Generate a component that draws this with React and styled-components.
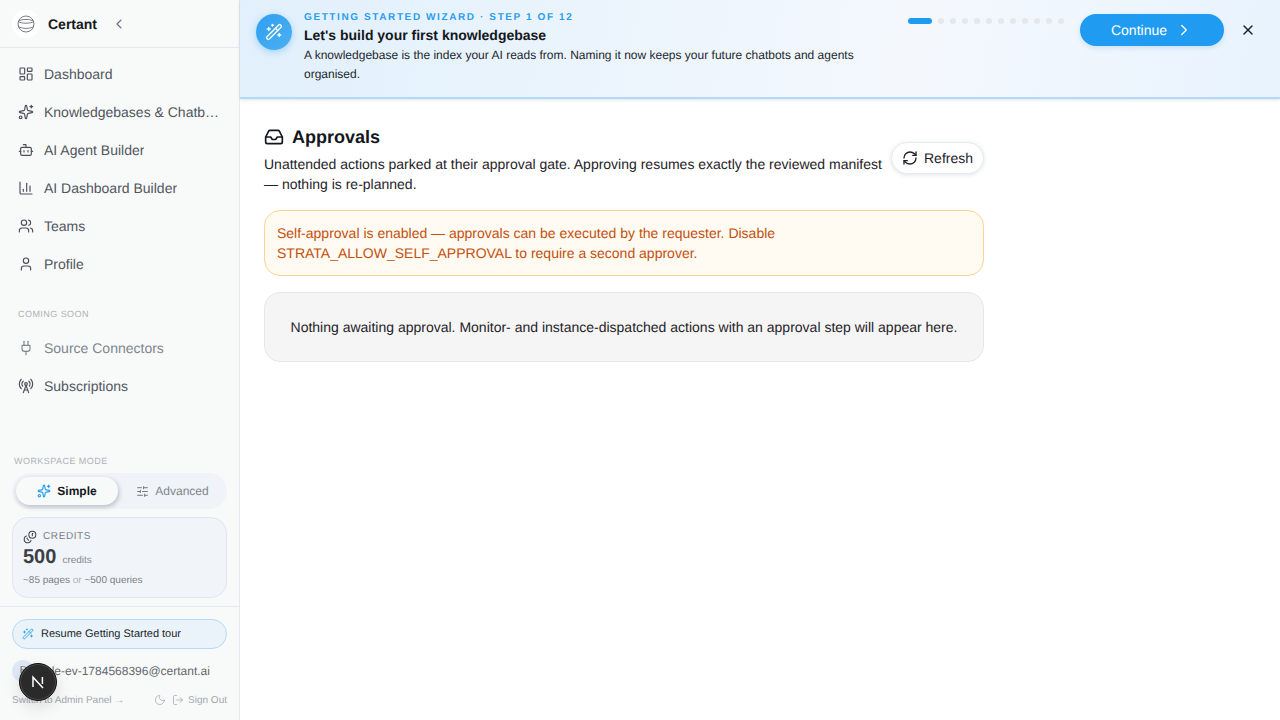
import React from "react";
import styled, { createGlobalStyle } from "styled-components";
import {
  LayoutDashboard, Sparkles, Bot, ChartColumn, Users, User, Plug, RadioTower,
  SlidersHorizontal, Coins, WandSparkles, Moon, LogOut, Inbox, RefreshCw,
  ChevronLeft, ChevronRight, X,
} from "lucide-react";

const Global = createGlobalStyle`
  html, body { margin: 0; padding: 0; height: 100%; background: #fff; overflow: hidden; }
  body {
    font-family: "Liberation Sans", Arial, sans-serif;
    color: #111418;
    text-rendering: geometricPrecision;
    -webkit-font-smoothing: antialiased;
  }
  * { box-sizing: border-box; }
`;

const Page = styled.div`
  display: flex;
  width: 1280px;
  height: 720px;
  overflow: hidden;
`;

const Sidebar = styled.aside`
  width: 240px;
  height: 720px;
  flex: none;
  display: flex;
  flex-direction: column;
  background: #f8fafa;
  border-right: 1px solid #e5e9f0;
`;

const Brand = styled.div`
  height: 48px;
  flex: none;
  display: flex;
  align-items: center;
  padding: 0 12px;
  border-bottom: 1px solid #e4e8ef;
`;

const LogoDisc = styled.div`
  width: 28px;
  height: 28px;
  border-radius: 50%;
  background: #fff;
  display: flex;
  align-items: center;
  justify-content: center;
  color: #6a6d71;
`;

const BrandName = styled.span`
  margin-left: 8px;
  font-size: 14px;
  font-weight: 700;
  color: #17191c;
`;

const Collapse = styled.span`
  margin-left: 14px;
  display: flex;
  color: #6b7280;
`;

const Nav = styled.nav`
  display: flex;
  flex-direction: column;
  padding: 7px 6px 0;
`;

const NavItem = styled.div`
  height: 38px;
  display: flex;
  align-items: center;
  gap: 10px;
  padding: 0 12px;
  font-size: 14px;
  color: ${(p) => (p.$muted ? "#80868e" : "#51565e")};
  & > svg { flex: none; color: ${(p) => (p.$muted ? "#80868e" : "#4b5058")}; }
`;

const NavText = styled.span`
  white-space: nowrap;
  overflow: hidden;
  text-overflow: ellipsis;
`;

const SectionLabel = styled.div`
  padding: 0 12px;
  margin: 21px 0 5px;
  height: 20px;
  line-height: 20px;
  font-size: 9px;
  letter-spacing: 0.45px;
  color: #aeb2b8;
`;

const ModeArea = styled.div`
  margin-top: auto;
  padding: 0 12px 8px;
  display: flex;
  flex-direction: column;
`;

const ModeLabel = styled.div`
  padding-left: 2px;
  font-size: 9px;
  line-height: 12px;
  letter-spacing: 0.45px;
  color: #aeb2b8;
  margin-bottom: 6px;
`;

const Toggle = styled.div`
  height: 36px;
  width: 215px;
  padding: 4px;
  display: flex;
  border-radius: 18px;
  background: #f0f3f8;
`;

const ToggleOption = styled.div`
  flex: ${(p) => (p.$active ? "0 0 102px" : "1")};
  display: flex;
  align-items: center;
  justify-content: center;
  gap: 6px;
  padding-left: ${(p) => (p.$active ? "0" : "4px")};
  border-radius: 14px;
  font-size: 12px;
  font-weight: ${(p) => (p.$active ? 700 : 400)};
  color: ${(p) => (p.$active ? "#14171a" : "#7f858c")};
  background: ${(p) => (p.$active ? "#f8fafa" : "transparent")};
  box-shadow: ${(p) => (p.$active ? "1px 2px 5px rgba(40,50,70,.28)" : "none")};
  & > svg { color: ${(p) => (p.$active ? "#2a9df0" : "#6d7279")}; }
`;

const CreditCard = styled.div`
  margin-top: 8px;
  width: 215px;
  height: 81px;
  padding: 11px 10px 0;
  border-radius: 16px;
  background: #f1f5f9;
  border: 1px solid #e0e6ee;
`;

const CreditHead = styled.div`
  display: flex;
  align-items: center;
  gap: 6px;
  height: 15px;
  font-size: 10px;
  letter-spacing: 0.6px;
  color: #7b8087;
`;

const CreditIcon = styled(Coins)`
  color: #3d4248;
  transform: scaleX(-1);
`;

const CreditValueRow = styled.div`
  display: flex;
  align-items: baseline;
  gap: 6px;
  margin-top: 2px;
  height: 24px;
`;

const CreditValue = styled.span`
  font-size: 20px;
  font-weight: 700;
  color: #3b4046;
`;

const CreditUnit = styled.span`
  font-size: 10px;
  color: #858a91;
`;

const CreditNote = styled.div`
  margin-top: 4px;
  font-size: 10px;
  line-height: 14px;
  color: #7b8087;
  & > span { color: #aeb2b8; }
`;

const Footer = styled.div`
  height: 114px;
  flex: none;
  padding: 12px 12px 0;
  border-top: 1px solid #e4e8ef;
  display: flex;
  flex-direction: column;
`;

const ResumeButton = styled.div`
  height: 30px;
  display: flex;
  align-items: center;
  gap: 7px;
  padding: 0 9px 1px;
  border-radius: 15px;
  border: 1px solid #b3daf6;
  background: #eaf3fa;
  font-size: 11px;
  color: #22262b;
  & > svg { color: #2a9df0; }
`;

const UserRow = styled.div`
  margin-top: 10px;
  height: 24px;
  display: flex;
  align-items: center;
  gap: 11px;
  font-size: 12px;
  color: #63686f;
  white-space: nowrap;
`;

const Avatar = styled.div`
  width: 22px;
  height: 22px;
  flex: none;
  border-radius: 50%;
  background: #dfe8f6;
  text-align: center;
  font-size: 10px;
  line-height: 22px;
  color: #5e636a;
`;

const FootLinks = styled.div`
  margin-top: 5px;
  display: flex;
  align-items: center;
  justify-content: space-between;
  height: 24px;
  font-size: 10px;
  color: #a2a7ad;
`;

const SignOutGroup = styled.div`
  display: flex;
  align-items: center;
  gap: 4px;
`;

const MoonSlot = styled.span`
  display: flex;
  margin-right: 2px;
`;

const DevBadge = styled.div`
  position: absolute;
  left: 19px;
  top: 663px;
  width: 38px;
  height: 38px;
  border-radius: 50%;
  background: #2a2a2a;
  border: 1px solid #111;
  box-shadow: 0 0 0 1px #4a4a4a inset, 0 6px 16px rgba(0,0,0,.12);
  display: flex;
  align-items: center;
  justify-content: center;
  color: #fff;
`;

const Main = styled.main`
  flex: 1;
  min-width: 0;
  display: flex;
  flex-direction: column;
`;

const Banner = styled.section`
  height: 99px;
  flex: none;
  display: flex;
  align-items: flex-start;
  padding: 14px 20px 0 16px;
  background: linear-gradient(100deg, #e1f0fc 0%, #f4f8fd 65%, #e8f3fe 100%);
  border-bottom: 2px solid #b0daf7;
  box-shadow: 0 1px 3px rgba(30,50,80,.14);
`;

const WandDisc = styled.div`
  width: 36px;
  height: 36px;
  flex: none;
  border-radius: 50%;
  background: linear-gradient(135deg, #2f9ff0, #4bb0f3);
  box-shadow: 0 2px 7px rgba(40,150,240,.35);
  display: flex;
  align-items: center;
  justify-content: center;
  color: #fff;
`;

const BannerText = styled.div`
  margin-left: 12px;
  margin-top: -2px;
  width: 580px;
  flex: none;
`;

const Eyebrow = styled.div`
  font-size: 10px;
  line-height: 12px;
  font-weight: 700;
  letter-spacing: 1.6px;
  color: #2b9df0;
`;

const BannerTitle = styled.div`
  margin-top: 2px;
  font-size: 14px;
  line-height: 18px;
  font-weight: 700;
  color: #15181c;
`;

const BannerDesc = styled.div`
  margin-top: 2px;
  font-size: 12px;
  line-height: 19px;
  color: #23272c;
`;

const Dots = styled.div`
  margin-left: 24px;
  margin-top: 4px;
  display: flex;
  gap: 6px;
`;

const Dot = styled.span`
  height: 6px;
  width: ${(p) => (p.$active ? "24px" : "6px")};
  border-radius: 3px;
  background: ${(p) => (p.$active ? "#2099f0" : "#e6e7e9")};
`;

const ContinueButton = styled.div`
  margin-left: 16px;
  width: 144px;
  height: 32px;
  flex: none;
  display: flex;
  align-items: center;
  justify-content: center;
  gap: 8px;
  border-radius: 16px;
  background: #1f9cf1;
  color: #fff;
  font-size: 14px;
  box-shadow: 0 2px 5px rgba(40,110,200,.16);
`;

const CloseButton = styled.div`
  margin-left: 16px;
  width: 16px;
  height: 32px;
  display: flex;
  align-items: center;
  justify-content: center;
  color: #1b1e22;
`;

const Content = styled.div`
  width: 744px;
  padding: 26px 0 0 24px;
  display: flex;
  flex-direction: column;
`;

const HeaderRow = styled.div`
  display: flex;
  align-items: center;
  gap: 8px;
`;

const HeaderText = styled.div`
  flex: 1;
  min-width: 0;
`;

const Title = styled.h1`
  margin: 0;
  display: flex;
  align-items: center;
  gap: 8px;
  font-size: 18px;
  line-height: 24px;
  font-weight: 700;
  color: #14171b;
`;

const Subtitle = styled.p`
  margin: 5px 0 0;
  font-size: 14px;
  line-height: 20px;
  color: #1f2328;
`;

const RefreshButton = styled.div`
  width: 93px;
  height: 32px;
  flex: none;
  margin-bottom: 3px;
  display: flex;
  align-items: center;
  justify-content: center;
  gap: 6px;
  border-radius: 16px;
  border: 1px solid #e6ebf1;
  background: #fff;
  box-shadow: 0 1px 4px rgba(40,60,90,.14);
  font-size: 14px;
  color: #1f2328;
`;

const Alert = styled.div`
  margin-top: 16px;
  height: 66px;
  padding: 12px;
  border-radius: 16px;
  border: 1px solid #fbd58f;
  background: #fffaf2;
  font-size: 14px;
  line-height: 20px;
  color: #c4500c;
`;

const Empty = styled.div`
  margin-top: 16px;
  height: 70px;
  display: flex;
  align-items: center;
  justify-content: center;
  border-radius: 16px;
  border: 1px solid #e7e7e8;
  background: #f5f5f5;
  font-size: 14px;
  color: #1f2328;
`;

const CertantLogo = () => (
  <svg width="18" height="18" viewBox="0 0 18 18" fill="none" stroke="currentColor" strokeWidth="0.9">
    <circle cx="9" cy="9" r="8" />
    <path d="M1.4 6.4C3.5 3.8 14.5 3.8 16.6 6.4C14.5 8.8 3.5 8.8 1.4 6.4Z" />
    <path d="M1.4 11.4C4 14 14 14 16.6 11.4" />
  </svg>
);

const NextMark = () => (
  <svg width="16" height="16" viewBox="0 0 16 16" fill="none" stroke="currentColor" strokeWidth="1.5">
    <path d="M3 13V3.2L13 14" />
    <path d="M12.4 3v7" />
  </svg>
);

const primary = [
  [LayoutDashboard, "Dashboard"],
  [Sparkles, "Knowledgebases & Chatbots"],
  [Bot, "AI Agent Builder"],
  [ChartColumn, "AI Dashboard Builder"],
  [Users, "Teams"],
  [User, "Profile"],
];

export default function App() {
  return (
    <Page>
      <Global />
      <Sidebar>
        <Brand>
          <LogoDisc><CertantLogo /></LogoDisc>
          <BrandName>Certant</BrandName>
          <Collapse><ChevronLeft size={16} strokeWidth={1.75} /></Collapse>
        </Brand>
        <Nav>
          {primary.map(([Icon, label]) => (
            <NavItem key={label}>
              <Icon size={16} strokeWidth={1.75} />
              <NavText>{label}</NavText>
            </NavItem>
          ))}
          <SectionLabel>COMING SOON</SectionLabel>
          <NavItem $muted>
            <Plug size={16} strokeWidth={1.75} />
            <NavText>Source Connectors</NavText>
          </NavItem>
          <NavItem>
            <RadioTower size={16} strokeWidth={1.75} />
            <NavText>Subscriptions</NavText>
          </NavItem>
        </Nav>
        <ModeArea>
          <ModeLabel>WORKSPACE MODE</ModeLabel>
          <Toggle>
            <ToggleOption $active>
              <Sparkles size={14} strokeWidth={2} />
              Simple
            </ToggleOption>
            <ToggleOption>
              <SlidersHorizontal size={13} strokeWidth={1.75} />
              Advanced
            </ToggleOption>
          </Toggle>
          <CreditCard>
            <CreditHead>
              <CreditIcon size={14} strokeWidth={1.75} />
              CREDITS
            </CreditHead>
            <CreditValueRow>
              <CreditValue>500</CreditValue>
              <CreditUnit>credits</CreditUnit>
            </CreditValueRow>
            <CreditNote>~85 pages <span>or</span> ~500 queries</CreditNote>
          </CreditCard>
        </ModeArea>
        <Footer>
          <ResumeButton>
            <WandSparkles size={12} strokeWidth={1.75} />
            Resume Getting Started tour
          </ResumeButton>
          <UserRow>
            <Avatar>P</Avatar>
            <span>ple-ev-1784568396@certant.ai</span>
          </UserRow>
          <FootLinks>
            <span>Switch to Admin Panel →</span>
            <SignOutGroup>
              <MoonSlot><Moon size={12} strokeWidth={1.5} /></MoonSlot>
              <LogOut size={12} strokeWidth={1.5} />
              <span>Sign Out</span>
            </SignOutGroup>
          </FootLinks>
        </Footer>
      </Sidebar>
      <Main>
        <Banner>
          <WandDisc><WandSparkles size={18} strokeWidth={1.75} /></WandDisc>
          <BannerText>
            <Eyebrow>GETTING STARTED WIZARD · STEP 1 OF 12</Eyebrow>
            <BannerTitle>Let's build your first knowledgebase</BannerTitle>
            <BannerDesc>
              A knowledgebase is the index your AI reads from. Naming it now keeps your future chatbots and agents organised.
            </BannerDesc>
          </BannerText>
          <Dots>
            {Array.from({ length: 12 }, (_, i) => <Dot key={i} $active={i === 0} />)}
          </Dots>
          <ContinueButton>
            Continue
            <ChevronRight size={18} strokeWidth={1.75} />
          </ContinueButton>
          <CloseButton><X size={16} strokeWidth={2} /></CloseButton>
        </Banner>
        <Content>
          <HeaderRow>
            <HeaderText>
              <Title><Inbox size={20} strokeWidth={2} />Approvals</Title>
              <Subtitle>
                Unattended actions parked at their approval gate. Approving resumes exactly the reviewed manifest — nothing is re-planned.
              </Subtitle>
            </HeaderText>
            <RefreshButton>
              <RefreshCw size={16} strokeWidth={2} />
              Refresh
            </RefreshButton>
          </HeaderRow>
          <Alert>
            Self-approval is enabled — approvals can be executed by the requester. Disable STRATA_ALLOW_SELF_APPROVAL to require a second approver.
          </Alert>
          <Empty>
            Nothing awaiting approval. Monitor- and instance-dispatched actions with an approval step will appear here.
          </Empty>
        </Content>
      </Main>
      <DevBadge><NextMark /></DevBadge>
    </Page>
  );
}
